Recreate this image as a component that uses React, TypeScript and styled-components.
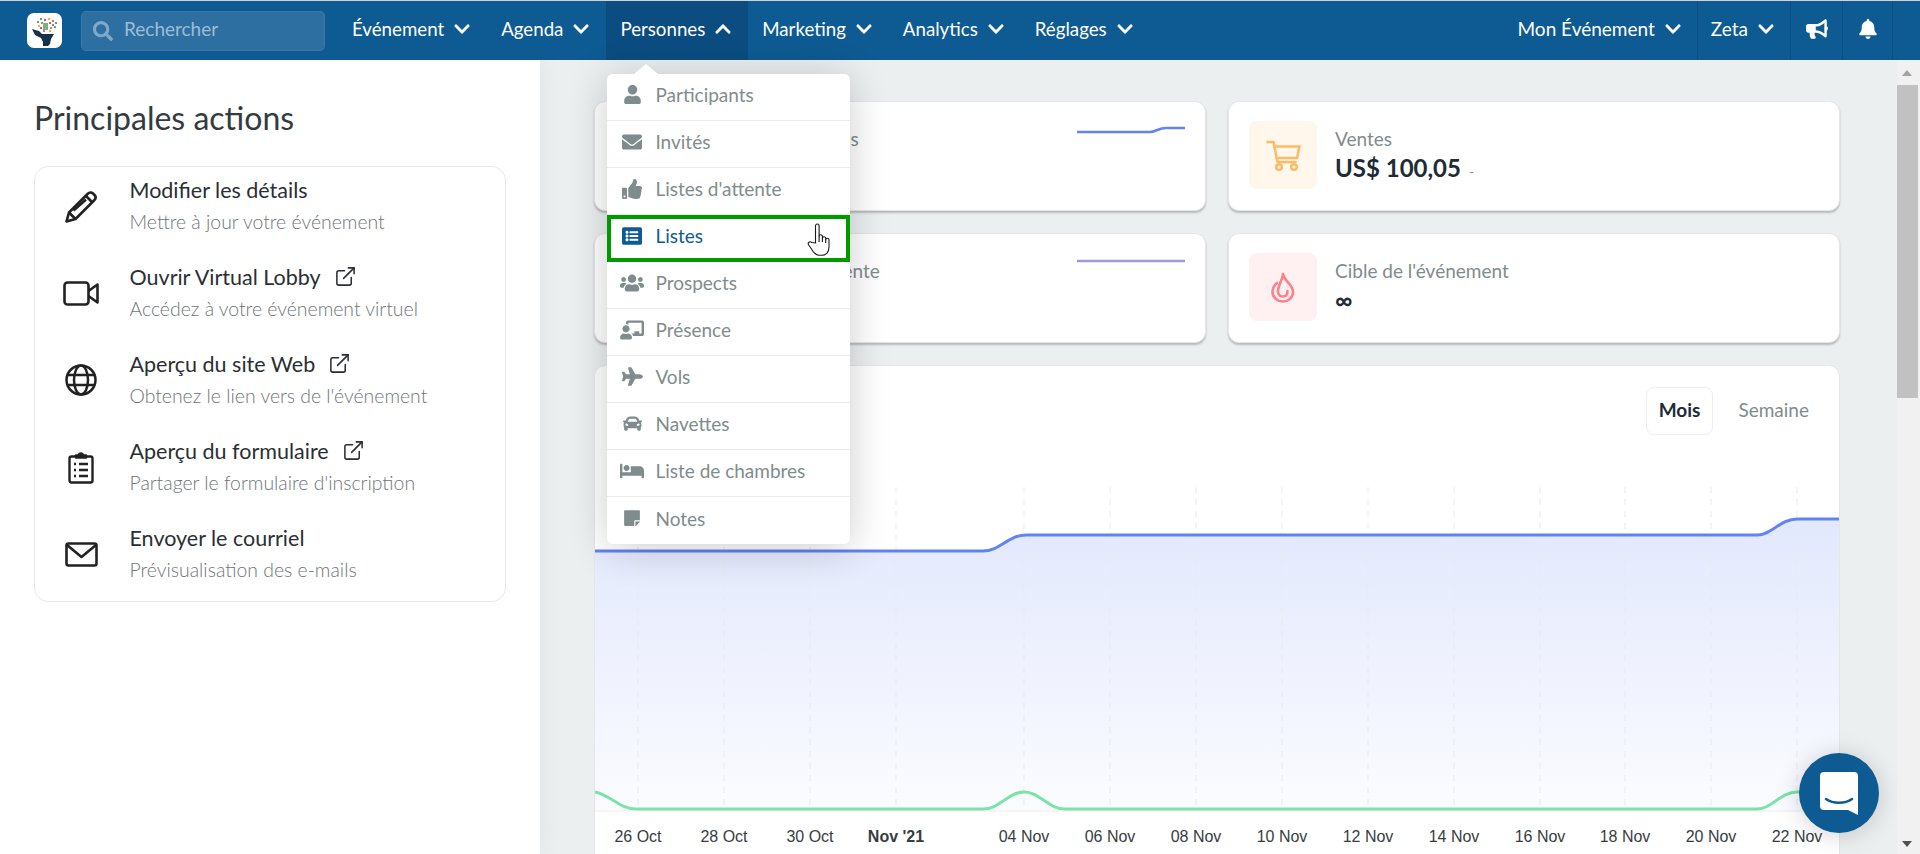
import React from 'react'
import styled, {createGlobalStyle} from 'styled-components'
import {
  FaBed,
  FaBell,
  FaBullhorn,
  FaCar,
  FaChalkboardTeacher,
  FaChevronDown,
  FaChevronUp,
  FaEnvelope,
  FaListAlt,
  FaPlane,
  FaSearch,
  FaStickyNote,
  FaThumbsUp,
  FaUser,
  FaUsers,
} from 'react-icons/fa'
import {FiExternalLink} from 'react-icons/fi'

const GlobalStyle = createGlobalStyle`
  html, body {
    margin: 0;
    height: 100%;
    overflow: hidden;
    font-family: 'Lato', sans-serif;
    background: #ebeff0;
  }
  * { box-sizing: border-box; }
`

const Page = styled.div`
  display: flex;
  flex-direction: column;
  width: 1920px;
  height: 854px;
  overflow: hidden;
  position: relative;
`

const Header = styled.header`
  display: flex;
  align-items: stretch;
  flex: 0 0 60px;
  height: 60px;
  padding-left: 27px;
  padding-right: 27px;
  background: #0e5a92;
  border-top: 1px solid #cfd3d6;
  color: #fff;
  position: relative;
  z-index: 10;
`

const Logo = styled.div`
  flex: 0 0 35px;
  align-self: center;
  height: 35px;
  margin-right: 19px;
  background: #fff;
  border-radius: 7px;
  overflow: hidden;
  display: flex;
`

const Search = styled.label`
  display: flex;
  align-items: center;
  flex: 0 0 244px;
  align-self: center;
  height: 40px;
  padding-left: 11px;
  gap: 11px;
  background: #2e6fa1;
  border: 1px solid #3a79a9;
  border-radius: 5px;
  color: #7fa9ca;
`

const SearchInput = styled.input`
  width: 190px;
  margin-bottom: 4px;
  background: transparent;
  border: 0;
  outline: 0;
  padding: 0;
  font-family: 'Lato', sans-serif;
  font-size: 19px;
  &::placeholder {
    color: #9cbcd5;
    opacity: 1;
  }
`

const Nav = styled.nav`
  display: flex;
  margin-left: 13px;
  flex: 1;
`

const NavItem = styled.div<{$active?: boolean}>`
  display: flex;
  align-items: center;
  gap: 9px;
  padding: 0 16px 4px 14px;
  font-size: 18.7px;
  position: relative;
  background: ${p => (p.$active ? '#0b4d80' : 'transparent')};
`

const RightNav = styled.div`
  display: flex;
  align-items: stretch;
`

const RightItem = styled.div<{$w?: number}>`
  display: flex;
  align-items: center;
  justify-content: center;
  gap: 9px;
  padding: 0 15px 4px 13px;
  font-size: 19px;
  border-right: 1px solid #0b5085;
  ${p => (p.$w ? `width: ${p.$w}px; padding-left: 0; padding-right: 0;` : '')}
`

const Dropdown = styled.div`
  position: absolute;
  top: 73px;
  left: 1px;
  width: 243px;
  background: #fff;
  border-radius: 6px;
  box-shadow: 0 4px 40px rgba(0, 0, 0, 0.2);
  &::before {
    content: '';
    position: absolute;
    left: 27px;
    top: -10px;
    border-left: 12px solid transparent;
    border-right: 12px solid transparent;
    border-bottom: 10px solid #fff;
  }
`

const DropdownItem = styled.div<{$active?: boolean}>`
  display: flex;
  align-items: center;
  height: 47px;
  padding: 0 0 5px 0;
  border-bottom: 1px solid #ebebeb;
  color: ${p => (p.$active ? '#0e5a92' : '#7f8c8d')};
  font-size: 19px;
  outline: ${p => (p.$active ? '4px solid #009900' : '0')};
  outline-offset: -4px;
  position: relative;
  &:last-child {
    border-bottom: 0;
  }
`

const DropdownIcon = styled.span`
  flex: 0 0 48px;
  display: flex;
  justify-content: center;
  padding-left: 2px;
`

const Cursor = styled.span`
  position: absolute;
  left: 200px;
  top: 8px;
  display: flex;
`

const Body = styled.div`
  display: flex;
  flex: 1;
  min-height: 0;
`

const Sidebar = styled.aside`
  flex: 0 0 540px;
  background: #fff;
  padding: 37px 34px 0;
  box-shadow: 0 0 24px rgba(0, 0, 0, 0.06);
  position: relative;
  z-index: 1;
`

const SidebarTitle = styled.h2`
  margin: 0 0 27px;
  font-size: 32px;
  line-height: 42px;
  font-weight: 400;
  color: #333b3f;
`

const ActionBox = styled.div`
  height: 436px;
  border: 1px solid #e8e8e8;
  border-radius: 14px;
`

const ActionRow = styled.div`
  display: flex;
  align-items: center;
  height: 87px;
  padding: 10px 0 22px;
`

const ActionIcon = styled.div`
  flex: 0 0 60px;
  margin: 3px 18.5px 0 16px;
  display: flex;
  justify-content: center;
  color: #222;
`

const ActionTitle = styled.div`
  display: flex;
  align-items: center;
  gap: 13px;
  font-size: 21.5px;
  line-height: 26px;
  color: #2b2f33;
`

const ActionSub = styled.div`
  margin-top: 8px;
  font-size: 19.4px;
  line-height: 22px;
  font-weight: 300;
  color: #6f7578;
`

const Main = styled.main`
  flex: 1;
  padding: 41px 57px 0 54px;
  overflow: hidden;
  display: grid;
  grid-template-columns: 612px 612px;
  grid-template-rows: 110px 110px 520px;
  column-gap: 22px;
  row-gap: 22px;
`

const Card = styled.section`
  display: flex;
  height: 110px;
  padding: 19px 20px;
  background: #fff;
  border: 1px solid #e4e7e8;
  border-radius: 11px;
  box-shadow: 0 2px 2px rgba(0, 0, 0, 0.22);
`

const Tile = styled.div<{$bg: string}>`
  flex: 0 0 68px;
  height: 68px;
  margin-right: 18px;
  border-radius: 8px;
  background: ${p => p.$bg};
  display: flex;
  align-items: center;
  justify-content: center;
`

const CardText = styled.div`
  flex: 1;
  padding-top: 7px;
`

const CardLabel = styled.div`
  font-size: 19px;
  line-height: 22px;
  color: #7f8c8d;
`

const CardValue = styled.div`
  margin-top: 3px;
  font-size: 24px;
  line-height: 30px;
  font-weight: 700;
  color: #212b36;
`

const Dash = styled.span`
  margin-left: 8px;
  font-size: 14px;
  font-weight: 400;
  color: #7f8c8d;
`

const Spark = styled.svg`
  flex: 0 0 108px;
  margin-top: 4px;
`

const ChartCard = styled.section`
  grid-column: 1 / 3;
  background: #fff;
  border: 1px solid #e4e7e8;
  border-radius: 11px;
`

const ChartHead = styled.div`
  display: flex;
  justify-content: flex-end;
  align-items: flex-start;
  height: 114px;
  padding: 21px 29px 0 0;
`

const RangeButton = styled.div<{$active?: boolean}>`
  height: 48px;
  display: flex;
  align-items: center;
  padding-bottom: 4px;
  font-size: 19px;
  border-radius: 8px;
  padding-left: ${p => (p.$active ? '12px' : '24px')};
  padding-right: ${p => (p.$active ? '12px' : '0')};
  border: 1px solid ${p => (p.$active ? '#eeeeee' : 'transparent')};
  font-weight: ${p => (p.$active ? 700 : 400)};
  color: ${p => (p.$active ? '#212b36' : '#7f8c8d')};
`

const Scrollbar = styled.div`
  position: absolute;
  top: 60px;
  right: 0;
  bottom: 0;
  width: 23px;
  background: #f1f1f1;
  padding-right: 2px;
  display: flex;
  flex-direction: column;
  align-items: stretch;
`

const ScrollArrow = styled.div<{$down?: boolean}>`
  width: 0;
  height: 0;
  position: absolute;
  left: 5px;
  border-left: 5.5px solid transparent;
  border-right: 5.5px solid transparent;
  ${p =>
    p.$down
      ? 'bottom: 7px; border-top: 6px solid #505050;'
      : 'top: 10px; border-bottom: 6px solid #a3a3a3;'}
`

const ScrollThumb = styled.div`
  margin-top: 25px;
  height: 313px;
  background: #c1c1c1;
`

const Chat = styled.div`
  position: absolute;
  left: 1799px;
  top: 753px;
  width: 80px;
  height: 80px;
  border-radius: 50%;
  background: #0e5a92;
  box-shadow: 0 2px 24px rgba(0, 0, 0, 0.18);
  display: flex;
  align-items: center;
  justify-content: center;
  z-index: 5;
`

const XLabel = styled.text<{$bold?: boolean}>`
  font-family: 'Liberation Sans', sans-serif;
  font-size: 16px;
  fill: #373d3f;
  text-anchor: middle;
  font-weight: ${p => (p.$bold ? 700 : 400)};
`

const NAV = ['Événement', 'Agenda', 'Personnes', 'Marketing', 'Analytics', 'Réglages']

const MENU = [
  {label: 'Participants', icon: <FaUser size={19} />},
  {label: 'Invités', icon: <FaEnvelope size={20} />},
  {label: "Listes d'attente", icon: <FaThumbsUp size={20} />},
  {label: 'Listes', icon: <FaListAlt size={20} />, active: true},
  {label: 'Prospects', icon: <FaUsers size={24} />},
  {label: 'Présence', icon: <FaChalkboardTeacher size={24} />},
  {label: 'Vols', icon: <FaPlane size={21} />},
  {label: 'Navettes', icon: <FaCar size={19} />},
  {label: 'Liste de chambres', icon: <FaBed size={24} />},
  {label: 'Notes', icon: <FaStickyNote size={18} />},
]

const PencilIcon = () => (
  <svg width="33" height="33" viewBox="0 0 33 33" fill="none" stroke="#222" strokeWidth="2.6" strokeLinejoin="round">
    <path d="M1.5 31.5L4 22.500 22.500 4c2-2 4-2 5.500-.5l1.500 1.500c1.500 1.500 1.500 3.500-.5 5.500L10.500 29z" />
    <path d="M4 22.500l6.500 6.500M21 6l6.500 6.500M8.500 20.500L21 9.500" />
  </svg>
)

const VideoIcon = () => (
  <svg width="36" height="25" viewBox="0 0 36 25" fill="none" stroke="#222" strokeWidth="2.6" strokeLinejoin="round">
    <rect x="1.500" y="1.500" width="24" height="22" rx="3" />
    <path d="M25.500 10l9-6.500v18l-9-6.500" />
  </svg>
)

const GlobeIcon = () => (
  <svg width="32" height="32" viewBox="0 0 32 32" fill="none" stroke="#222" strokeWidth="2.500">
    <circle cx="16" cy="16" r="14.500" />
    <ellipse cx="16" cy="16" rx="7" ry="14.500" />
    <path d="M2.500 11h27M2.500 21h27" />
  </svg>
)

const ClipboardIcon = () => (
  <svg width="26" height="33" viewBox="0 0 26 33" fill="none" stroke="#222" strokeWidth="2.400" strokeLinejoin="round">
    <rect x="1.500" y="5.500" width="23" height="26" rx="2" />
    <path d="M8 6.500h10V4.500h-3a2 2 0 0 0-4 0H8z" fill="#222" />
    <path d="M6 13h2M11 13h9M6 19h2M11 19h9M6 25h2M11 25h9" />
  </svg>
)

const MailIcon = () => (
  <svg width="33" height="25" viewBox="0 0 33 25" fill="none" stroke="#222" strokeWidth="2.600" strokeLinejoin="round">
    <rect x="1.500" y="1.500" width="30" height="22" rx="2" />
    <path d="M2 3l14.500 12L31 3" />
  </svg>
)

const CartIcon = () => (
  <svg width="35" height="31" viewBox="0 0 35 31" fill="none" stroke="#fbbc63" strokeWidth="2.500" strokeLinejoin="round" strokeLinecap="round">
    <path d="M1.500 2h6l4 20h18" />
    <path d="M8 6.500h25.500l-2.500 11.500H10.500" />
    <circle cx="13" cy="27" r="2.800" />
    <circle cx="28" cy="27" r="2.800" />
  </svg>
)

const FlameIcon = () => (
  <svg width="24" height="31" viewBox="0 0 24 31" fill="none" stroke="#ff7f8b" strokeWidth="2.600" strokeLinecap="round" strokeLinejoin="round">
    <path d="M12 2c1 7 10 10 10 18 0 6-5 9.500-10 9.500S1.500 26 1.500 20c0-4 2-7 4.500-9" />
    <path d="M12 2c0 5-5 11-5 17.500 0 3.500 2.500 5 5 5 3 0 4.500-2.500 4.500-5.500" />
  </svg>
)

const ACTIONS = [
  {title: 'Modifier les détails', sub: 'Mettre à jour votre événement', icon: <PencilIcon />},
  {title: 'Ouvrir Virtual Lobby', sub: 'Accédez à votre événement virtuel', icon: <VideoIcon />, external: true},
  {title: 'Aperçu du site Web', sub: "Obtenez le lien vers de l'événement", icon: <GlobeIcon />, external: true},
  {title: 'Aperçu du formulaire', sub: "Partager le formulaire d'inscription", icon: <ClipboardIcon />, external: true},
  {title: 'Envoyer le courriel', sub: 'Prévisualisation des e-mails', icon: <MailIcon />},
]

const LOGO_DOTS: [number, number, string][] = [
  [10, 8, '#e8734a'], [13, 5, '#4fa3a5'], [17, 6, '#d94f70'], [21, 5, '#f0b429'], [25, 7, '#e8734a'],
  [28, 9, '#4fa3a5'], [11, 12, '#f0b429'], [14, 9, '#7cb342'], [22, 9, '#d94f70'], [25, 11, '#4fa3a5'],
  [27, 13, '#e8734a'], [13, 14, '#d94f70'], [23, 14, '#7cb342'], [16, 17, '#e8734a'], [22, 17, '#f0b429'],
]

const AppLogo = () => (
  <svg width="35" height="35" viewBox="0 0 35 35">
    {LOGO_DOTS.map(([x, y, c]) => (
      <rect key={`${x}-${y}`} x={x} y={y} width="2" height="2" fill={c} />
    ))}
    <rect x="16" y="10" width="5" height="7" fill="#7fae8f" />
    <path d="M5 16l7 2 3 3h12l-3 5-1 5-2 2h-5v-4l-2-4-6-3z" fill="#16324a" />
  </svg>
)

const HandCursor = () => (
  <svg width="27" height="33" viewBox="0 0 27 33" fill="#fff" stroke="#1a1a1a" strokeWidth="1.100" strokeLinejoin="round">
    <path d="M8.500 20V2.800a1.800 1.800 0 0 1 3.600 0V13a1.700 1.700 0 0 1 3.300 0v2a1.700 1.700 0 0 1 3.300 0v1.500a1.700 1.700 0 0 1 3.300 0V24c0 5-3 8.300-7 8.300h-2.500c-3 0-4.800-1.800-6.500-4L1.700 22c-1.500-2.200 1-4.200 3-2.500z" />
    <path d="M12.100 13v6M15.400 15v4M18.700 16.500V20" fill="none" />
  </svg>
)

const DAY_TICKS = [
  {x: 638, label: '26 Oct'},
  {x: 724, label: '28 Oct'},
  {x: 810, label: '30 Oct'},
  {x: 896, label: "Nov '21", bold: true},
  {x: 1024, label: '04 Nov'},
  {x: 1110, label: '06 Nov'},
  {x: 1196, label: '08 Nov'},
  {x: 1282, label: '10 Nov'},
  {x: 1368, label: '12 Nov'},
  {x: 1454, label: '14 Nov'},
  {x: 1540, label: '16 Nov'},
  {x: 1625, label: '18 Nov'},
  {x: 1711, label: '20 Nov'},
  {x: 1797, label: '22 Nov'},
]

const BLUE_LINE = 'M595 551H983C1000 551 1008 535 1026 535H1757C1772 535 1780 519 1797 519H1839'
const GREEN_LINE = 'M595 792C610 795 620 809 636 809H983C1000 809 1008 792 1024 792C1040 792 1048 809 1065 809H1757C1772 809 1780 792 1797 792H1839'

const SalesChart = () => (
  <svg width="1244" height="374" viewBox="595 480 1244 374" style={{display: 'block'}}>
    <defs>
      <linearGradient id="areaFill" x1="0" y1="0" x2="0" y2="1">
        <stop offset="0" stopColor="#e2e8fd" />
        <stop offset="1" stopColor="#fbfcff" />
      </linearGradient>
    </defs>
    <path d={`${BLUE_LINE}V811H595Z`} fill="url(#areaFill)" />
    {DAY_TICKS.map(t => (
      <line key={t.x} x1={t.x} x2={t.x} y1="487" y2="807" stroke="#e9e9ee" strokeDasharray="6 6" />
    ))}
    <line x1="595" x2="1839" y1="811" y2="811" stroke="#eeeeee" />
    <path d={BLUE_LINE} fill="none" stroke="#6383f2" strokeWidth="3" />
    <path d={GREEN_LINE} fill="none" stroke="#7ce3a8" strokeWidth="3" />
    {DAY_TICKS.map(t => (
      <XLabel key={t.label} x={t.x} y="842" $bold={t.bold}>
        {t.label}
      </XLabel>
    ))}
  </svg>
)

const App = () => {
  return (
    <Page>
      <GlobalStyle />
      <Header>
        <Logo>
          <AppLogo />
        </Logo>
        <Search>
          <FaSearch size={20} />
          <SearchInput placeholder="Rechercher" />
        </Search>
        <Nav>
          {NAV.map(item => (
            <NavItem key={item} $active={item === 'Personnes'}>
              {item}
              {item === 'Personnes' ? <FaChevronUp size={18} /> : <FaChevronDown size={18} />}
              {item === 'Personnes' && (
                <Dropdown>
                  {MENU.map(m => (
                    <DropdownItem key={m.label} $active={m.active}>
                      <DropdownIcon>{m.icon}</DropdownIcon>
                      {m.label}
                      {m.active && (
                        <Cursor>
                          <HandCursor />
                        </Cursor>
                      )}
                    </DropdownItem>
                  ))}
                </Dropdown>
              )}
            </NavItem>
          ))}
        </Nav>
        <RightNav>
          <RightItem>
            Mon Événement <FaChevronDown size={18} />
          </RightItem>
          <RightItem>
            Zeta <FaChevronDown size={18} />
          </RightItem>
          <RightItem $w={52}>
            <FaBullhorn size={22} />
          </RightItem>
          <RightItem $w={50}>
            <FaBell size={20} />
          </RightItem>
        </RightNav>
      </Header>
      <Body>
        <Sidebar>
          <SidebarTitle>Principales actions</SidebarTitle>
          <ActionBox>
            {ACTIONS.map(a => (
              <ActionRow key={a.title}>
                <ActionIcon>{a.icon}</ActionIcon>
                <div>
                  <ActionTitle>
                    {a.title}
                    {a.external && <FiExternalLink size={23} strokeWidth={1.6} />}
                  </ActionTitle>
                  <ActionSub>{a.sub}</ActionSub>
                </div>
              </ActionRow>
            ))}
          </ActionBox>
        </Sidebar>
        <Main>
          <Card>
            <Tile $bg="#eef2ff" />
            <CardText>
              <CardLabel>Inscriptions totales</CardLabel>
            </CardText>
            <Spark width="108" height="12" viewBox="0 0 108 12" fill="none" stroke="#6383f2" strokeWidth="2.500">
              <path d="M0 7H73C78 7 82 3 89 3H108" />
            </Spark>
          </Card>
          <Card>
            <Tile $bg="#fff6ec">
              <CartIcon />
            </Tile>
            <CardText>
              <CardLabel>Ventes</CardLabel>
              <CardValue>
                US$ 100,05<Dash>-</Dash>
              </CardValue>
            </CardText>
          </Card>
          <Card>
            <Tile $bg="#f1f0fd" />
            <CardText>
              <CardLabel>Demandes en attente</CardLabel>
            </CardText>
            <Spark width="108" height="12" viewBox="0 0 108 12" fill="none" stroke="#9d9be0" strokeWidth="2.500">
              <path d="M0 4H108" />
            </Spark>
          </Card>
          <Card>
            <Tile $bg="#fff0f1">
              <FlameIcon />
            </Tile>
            <CardText>
              <CardLabel>Cible de l'événement</CardLabel>
              <CardValue>∞</CardValue>
            </CardText>
          </Card>
          <ChartCard>
            <ChartHead>
              <RangeButton $active>Mois</RangeButton>
              <RangeButton>Semaine</RangeButton>
            </ChartHead>
            <SalesChart />
          </ChartCard>
        </Main>
      </Body>
      <Scrollbar>
        <ScrollArrow />
        <ScrollThumb />
        <ScrollArrow $down />
      </Scrollbar>
      <Chat>
        <svg width="38" height="43" viewBox="0 0 38 43">
          <path d="M4 0h30a4 4 0 0 1 4 4v39l-10-5H4a4 4 0 0 1-4-4V4a4 4 0 0 1 4-4z" fill="#fff" />
          <path d="M6 27c7 5 19 5 26 0" fill="none" stroke="#0e5a92" strokeWidth="2.500" strokeLinecap="round" />
        </svg>
      </Chat>
    </Page>
  )
}

export default App
